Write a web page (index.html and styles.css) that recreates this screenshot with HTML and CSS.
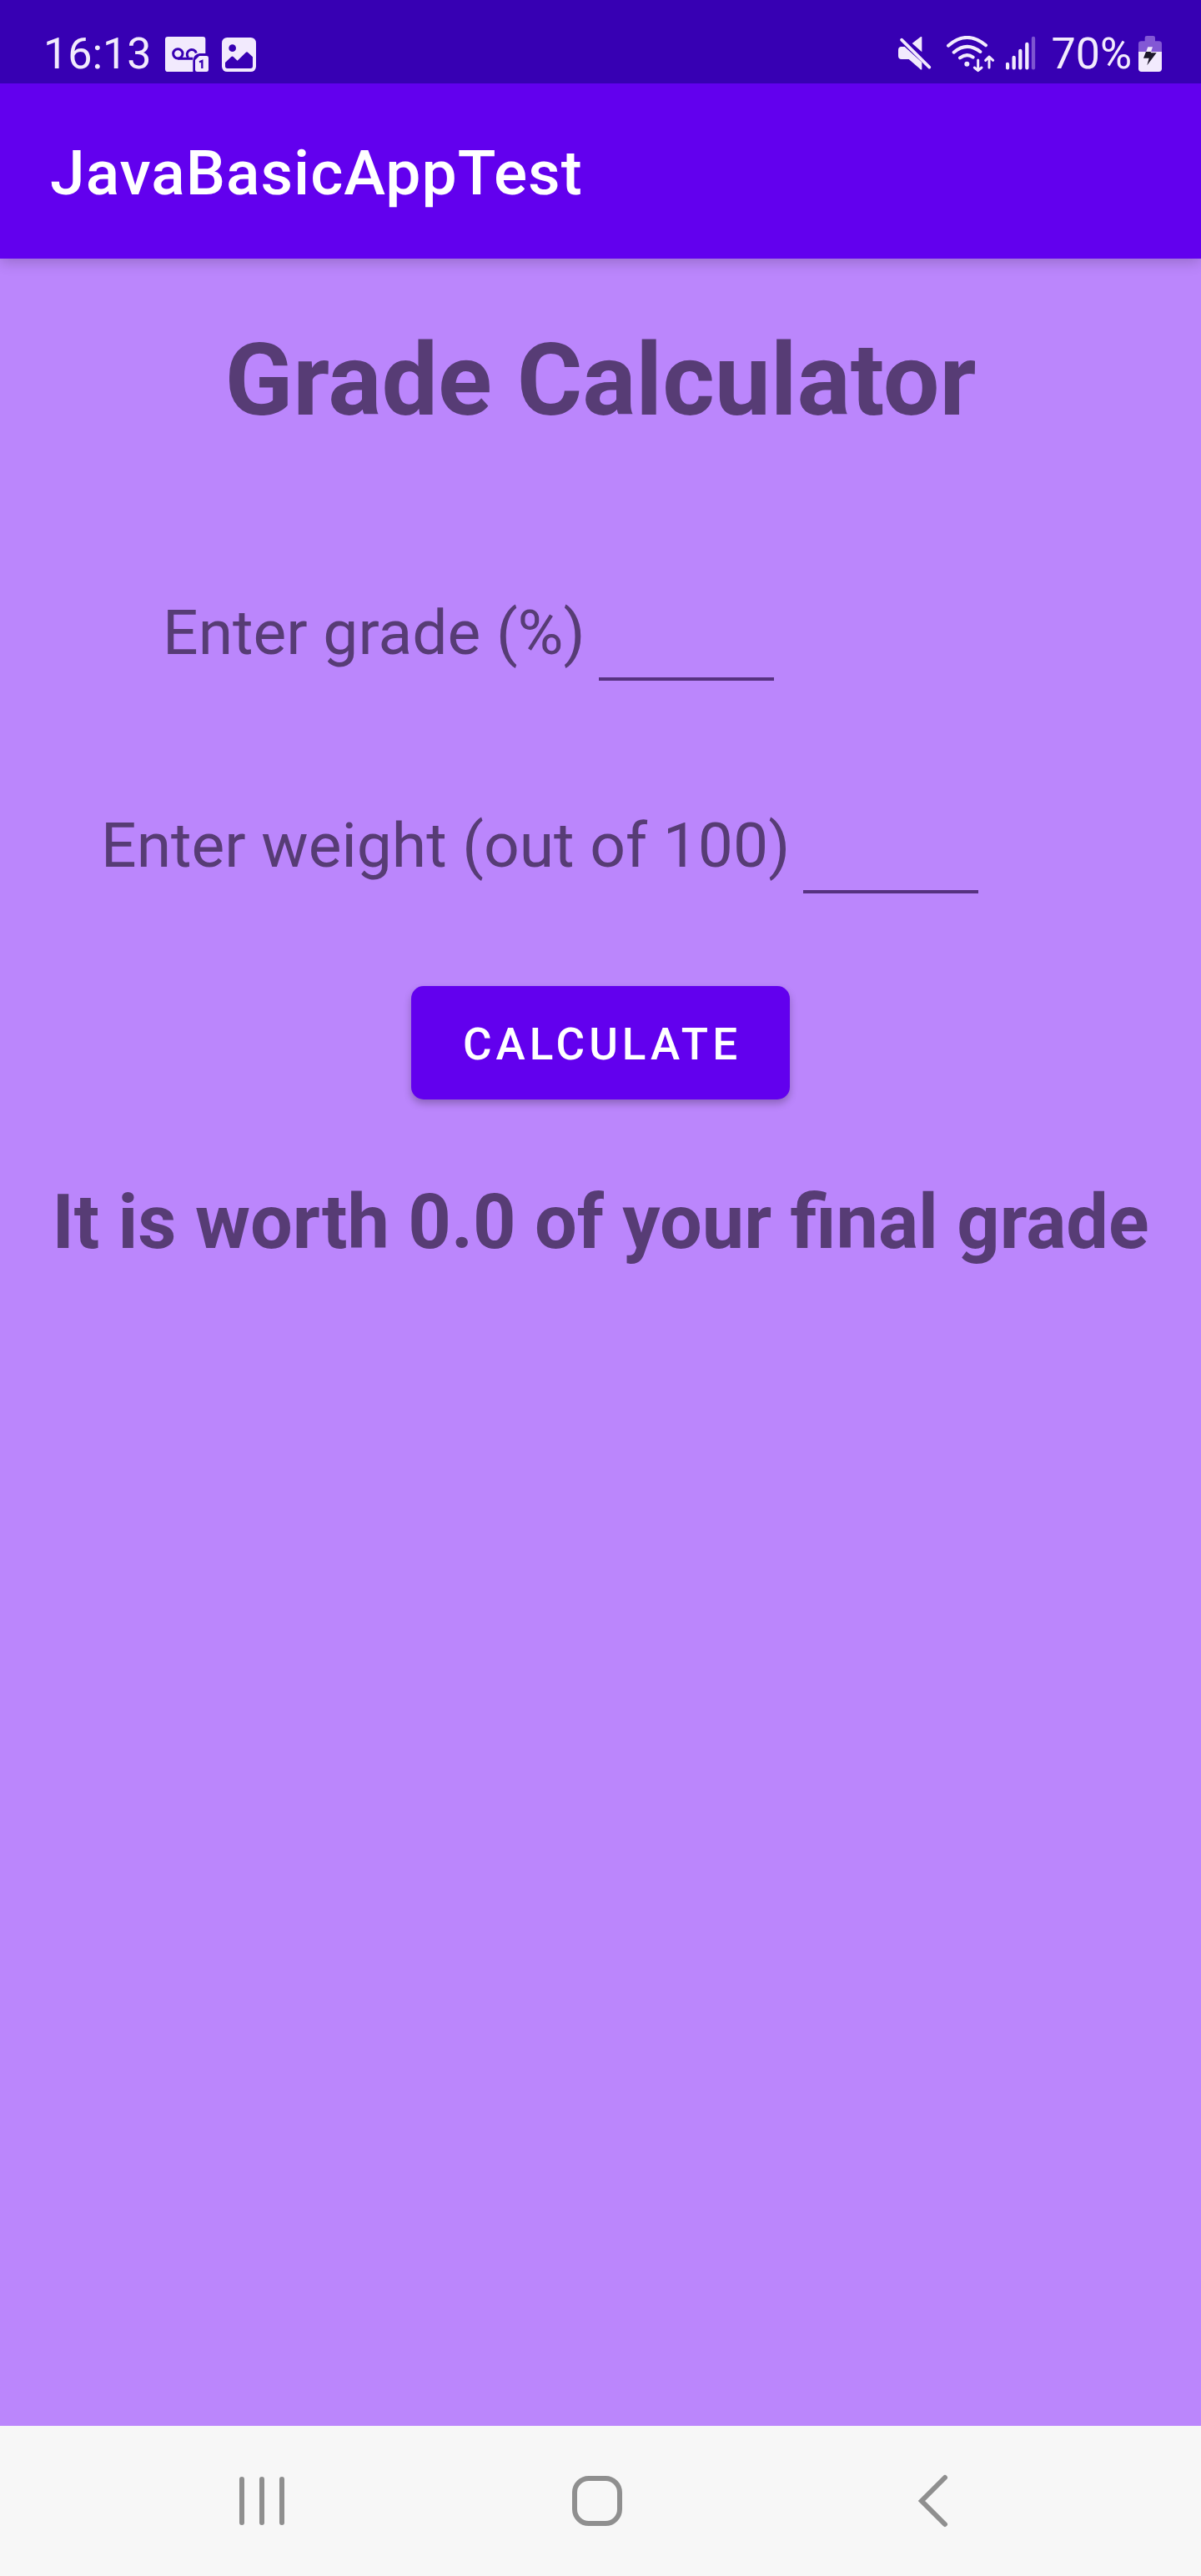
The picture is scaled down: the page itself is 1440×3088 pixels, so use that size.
FILE: index.html
```html
<!DOCTYPE html>
<html lang="en">
<head>
<meta charset="utf-8">
<meta name="viewport" content="width=device-width, initial-scale=1">
<title>JavaBasicAppTest</title>
<link rel="stylesheet" href="styles.css">
</head>
<body>
<div class="status-bar">
  <div class="status-left">
    <time>16:13</time>
    <svg width="52" height="44" viewBox="504 69 156 132" role="img" aria-label="Voicemail">
      <path fill="#f2eafd" d="M514 72H640Q649 72 649 81V132H628Q606 136 604 158V198H514Q504 198 504 188V82Q504 72 514 72Z"/>
      <g fill="none" stroke="#3700b3" stroke-width="9"><circle cx="550" cy="133" r="17"/><path d="M550 151H604M587 147A17 17 0 1 1 616 131"/></g>
      <path fill="#f2eafd" d="M627 141H653Q660 141 660 148V191Q660 198 653 198H619Q612 198 612 191V156Z"/>
      <path fill="none" stroke="#3700b3" stroke-width="7" d="M627 163L637 159V186"/>
    </svg>
    <svg width="41" height="44" viewBox="711 69 123 132" role="img" aria-label="Picture">
      <rect x="711" y="75" width="123" height="123" rx="19" fill="#f2eafd"/>
      <circle cx="749" cy="113" r="13" fill="#3700b3"/>
      <path fill="#3700b3" d="M723 165L745 144Q749 141 753 145L767 158L797 129Q801 125 805 129L822 145V178Q822 186 814 186H731Q723 186 723 178Z"/>
    </svg>
  </div>
  <div class="status-right">
    <svg width="45" height="44" viewBox="80 69 135 132" role="img" aria-label="Muted">
      <path fill="#f2eafd" d="M165 73V127L130 96L158 74Q162 70 165 73ZM89 108H103L165 164V190Q161 192 157 187L118 153H92Q80 153 80 141V120Q80 110 89 108Z"/>
      <path stroke="#f2eafd" stroke-width="11" stroke-linecap="round" d="M92 83L192 182"/>
    </svg>
    <svg width="58" height="44" viewBox="255 67 174 132" role="img" aria-label="Wi-Fi">
      <g fill="none" stroke="#f2eafd" stroke-width="12" stroke-linecap="round" stroke-linejoin="round">
        <path d="M261 102Q328 44 396 101M281 126Q328 86 376 124M303 146Q328 128 350 144"/>
        <path stroke-width="9" d="M368 154V191M355 181L368 192L381 181M408 181V142M395 155L408 142L422 155"/>
      </g>
      <circle cx="328" cy="168" r="9" fill="#f2eafd"/>
    </svg>
    <svg width="41" height="44" viewBox="468 69 123 132" role="img" aria-label="Mobile signal">
      <g stroke="#f2eafd" stroke-width="13" stroke-linecap="round"><path d="M474 171V184M497 147V184M520 123V184M544 99V184"/><path stroke="#7d55d1" d="M567 78V184"/></g>
    </svg>
    <div class="battery">
      <span>70%</span>
      <svg width="28" height="44" viewBox="945 69 84 132" role="img" aria-label="Charging">
        <path fill="#8358d5" d="M968 88V76Q968 69 975 69H998Q1005 69 1005 76V88H1018Q1029 88 1029 98V128H945V98Q945 88 956 88Z"/>
        <path fill="#f2eafd" d="M945 126H1029V187Q1029 198 1018 198H956Q945 198 945 187Z"/>
        <path fill="#f2eafd" d="M979 109H996L990 127H972Z"/>
        <path fill="#1c1729" d="M972 126H990L989 130H1010L976 175L983 149H963Z"/>
      </svg>
    </div>
  </div>
</div>
<header class="app-bar"><h1>JavaBasicAppTest</h1></header>
<main class="content">
  <h2 class="heading">Grade Calculator</h2>
  <form>
    <div class="field grade"><label for="grade">Enter grade (%)</label><input id="grade" type="text" inputmode="decimal"></div>
    <div class="field weight"><label for="weight">Enter weight (out of 100)</label><input id="weight" type="text" inputmode="decimal"></div>
    <button class="calculate" type="button">CALCULATE</button>
  </form>
  <p class="result">It is worth 0.0 of your final grade</p>
</main>
<nav class="nav-bar">
  <button type="button" aria-label="Recent apps"><svg width="64" height="64" viewBox="0 0 64 64"><path d="M8 6V58M32 6V58M56 6V58"/></svg></button>
  <button type="button" aria-label="Home"><svg width="64" height="64" viewBox="0 0 64 64"><rect x="5" y="5" width="54" height="54" rx="17"/></svg></button>
  <button type="button" aria-label="Back"><svg width="64" height="64" viewBox="0 0 64 64"><path d="M47 4L19 32L47 60"/></svg></button>
</nav>
</body>
</html>
```

FILE: styles.css
```css
* { box-sizing: border-box; }

body {
  margin: 0;
  min-height: 100vh;
  display: flex;
  flex-direction: column;
  background: #bb86fc;
  color: #573c75;
  font-family: Roboto, "Liberation Sans", sans-serif;
}

h1, h2, p { margin: 0; }
svg { display: block; flex: none; }

.status-bar {
  position: relative;
  z-index: 1;
  display: flex;
  justify-content: space-between;
  height: 100px;
  padding: 30px 47px 0 52px;
  background: #3700b3;
  color: #f2eafd;
  font-size: 52px;
  line-height: 70px;
}
.status-left, .status-right, .battery { display: flex; align-items: center; }
.status-left { gap: 16px; }
.status-right { gap: 13px; }
.battery { gap: 8px; }

.app-bar {
  display: flex;
  align-items: center;
  height: 210px;
  padding: 4px 60px 0;
  background: #6200ee;
  color: #fff;
  box-shadow: 0 4px 16px rgba(0, 0, 0, 0.2);
}
.app-bar h1 {
  font-size: 75px;
  font-weight: 500;
  line-height: 88px;
  letter-spacing: 1px;
}

.content { flex: 1; padding-top: 76px; }

.heading {
  margin-bottom: 187px;
  font-size: 120px;
  line-height: 141px;
  text-align: center;
}

.field {
  display: flex;
  align-items: flex-start;
  height: 102px;
  font-size: 75px;
  line-height: 88px;
}
.field input {
  width: 210px;
  height: 102px;
  margin-left: 16px;
  padding: 0;
  border: 0;
  border-bottom: 4px solid #573280;
  border-radius: 0;
  background: transparent;
  color: inherit;
  font: inherit;
  outline: 0;
}
.grade { margin-bottom: 153px; padding-left: 195px; }
.weight { margin-bottom: 111px; padding-left: 121px; }

.calculate {
  display: block;
  margin: 0 auto 95px;
  width: 454px;
  height: 136px;
  padding: 3px 0 0 4px;
  border: 0;
  border-radius: 15px;
  background: #6200ee;
  color: #fff;
  font-family: inherit;
  font-size: 53px;
  font-weight: 500;
  letter-spacing: 5px;
  box-shadow: 0 5px 10px rgba(0, 0, 0, 0.25);
}

.result {
  font-size: 90px;
  font-weight: 700;
  line-height: 106px;
  text-align: center;
}

.nav-bar {
  display: grid;
  grid-template-columns: repeat(3, 1fr);
  height: 180px;
  padding: 0 121px 0 113px;
  background: #f7f7f7;
}
.nav-bar button {
  display: flex;
  align-items: center;
  justify-content: center;
  padding: 0;
  border: 0;
  background: none;
}
.nav-bar svg {
  fill: none;
  stroke: #8f8f8f;
  stroke-width: 6;
  stroke-linecap: round;
}
```
